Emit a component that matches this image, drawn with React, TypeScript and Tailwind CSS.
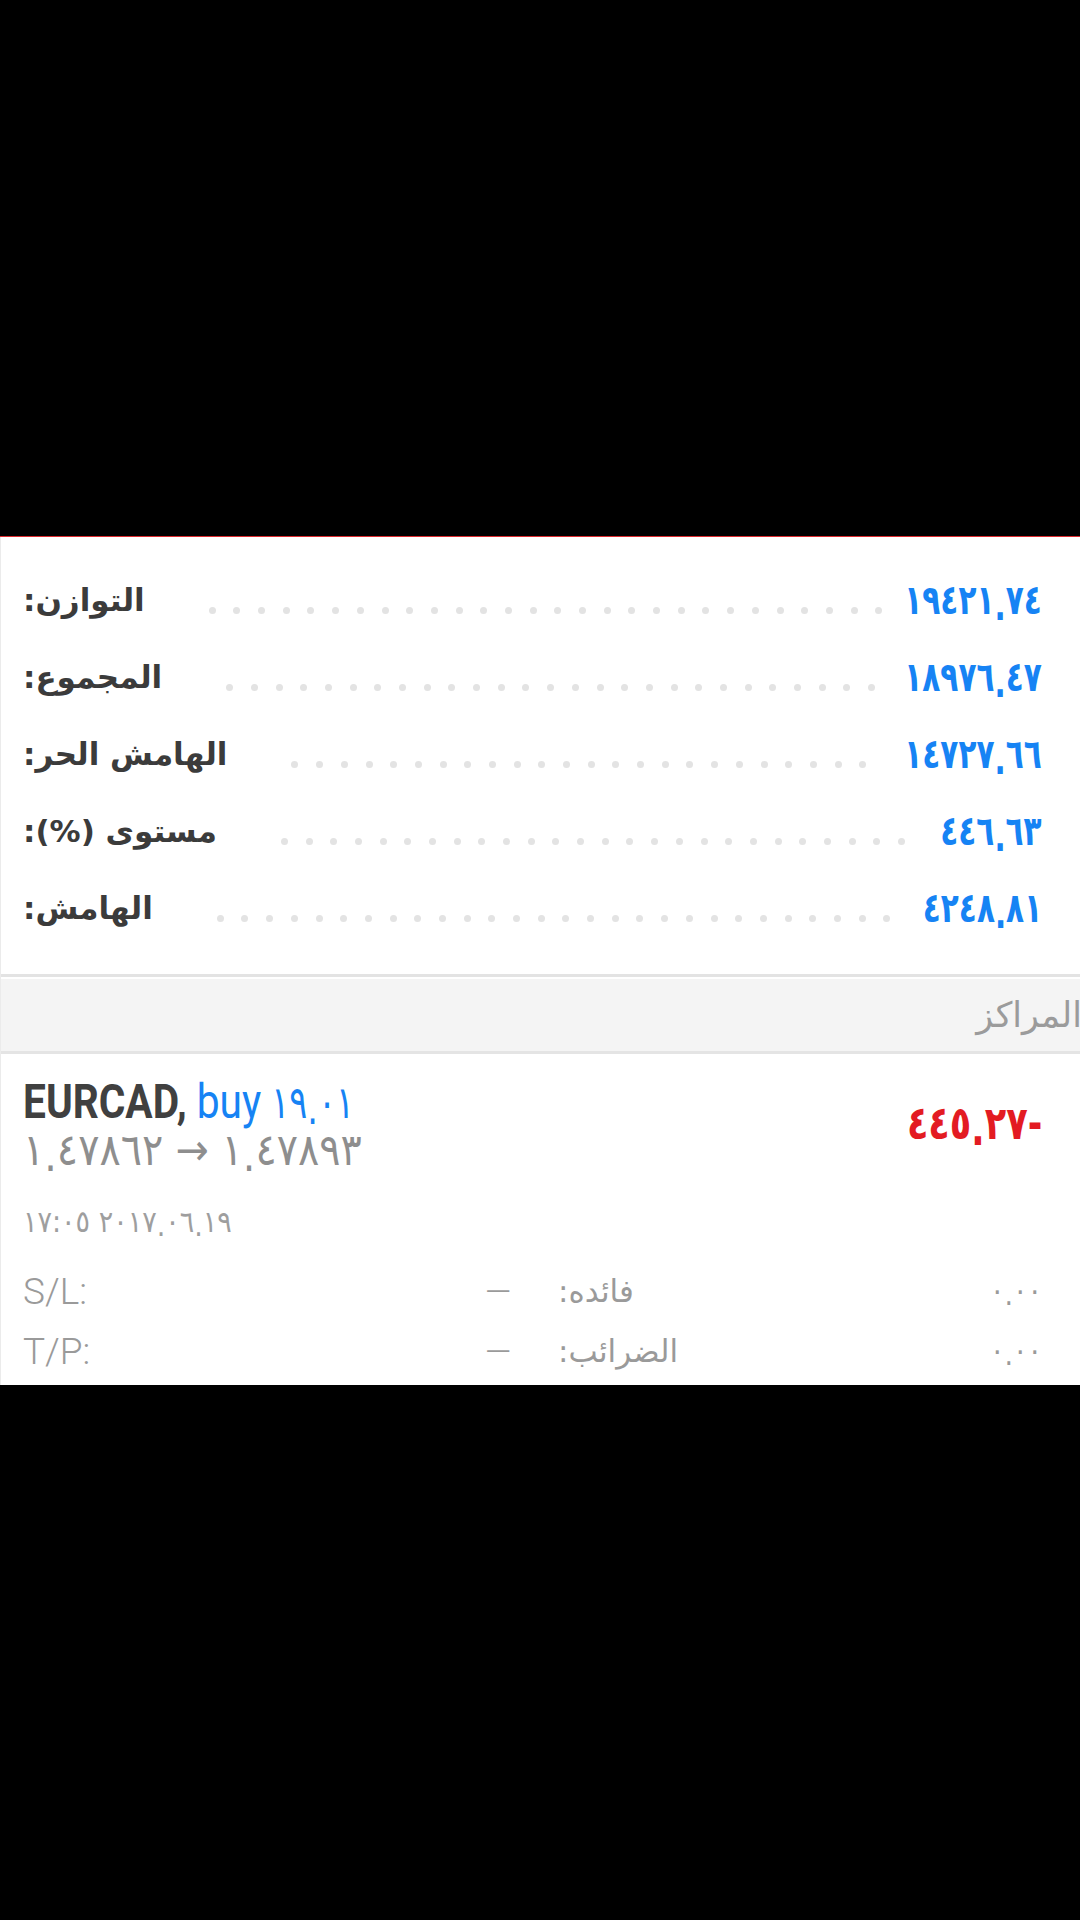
import React from "react";

const rows = [
  { label: "التوازن:", value: "١٩٤٢١.٧٤", pull: "-ml-[34px]" },
  { label: "المجموع:", value: "١٨٩٧٦.٤٧", pull: "-ml-[34px]" },
  { label: "الهامش الحر:", value: "١٤٧٢٧.٦٦", pull: "-ml-[34px]" },
  { label: "مستوى (%):", value: "٤٤٦.٦٣", pull: "-ml-[25px]" },
  { label: "الهامش:", value: "٤٢٤٨.٨١", pull: "-ml-[30px]" },
];

const dots = Array.from({ length: 40 });

function Num({ text }: { text: string }) {
  const parts = text.split(".");
  return (
    <>
      {parts.map((p, i) => (
        <React.Fragment key={i}>
          {i > 0 && <span className="relative top-[0.14em]">.</span>}
          {p}
        </React.Fragment>
      ))}
    </>
  );
}

function Leader() {
  return (
    <div className="flex-1 ml-[64px] mr-[22px] mt-[20px] h-[7px] overflow-hidden flex flex-wrap gap-x-[17.7px] gap-y-[20px]">
      {dots.map((_, i) => (
        <span key={i} className="block w-[7px] h-[7px] rounded-full bg-[#e3e3e3] shrink-0" />
      ))}
    </div>
  );
}

export default function App() {
  return (
    <div className="w-[1080px] h-[1920px] bg-black flex flex-col">
      <div className="h-[536px] shrink-0" />
      <div className="h-px bg-[#dc2a2e] shrink-0" />
      <div className="bg-white border-l border-[#ebebeb] flex flex-col shrink-0">
        {/* summary */}
        <div className="pt-[25px] pb-[27px] flex flex-col">
          {rows.map((r) => (
            <div key={r.label} className="h-[77px] flex items-center pl-[22px] pr-[38px]">
              <span
                dir="rtl"
                className="font-['DejaVu_Sans',sans-serif] font-bold text-[31px] text-[#3b3b3b] whitespace-nowrap"
              >
                {r.label}
              </span>
              <Leader />
              <span
                dir="ltr"
                className={`${r.pull} [unicode-bidi:bidi-override] font-['DejaVu_Sans_Condensed','DejaVu_Sans',sans-serif] font-bold text-[41px] leading-none text-[#1683f4] whitespace-nowrap scale-x-[0.8] origin-right`}
              >
                <Num text={r.value} />
              </span>
            </div>
          ))}
        </div>

        {/* section header */}
        <div className="h-[3px] bg-[#e3e3e3]" />
        <div className="h-[2px] bg-white" />
        <div className="h-[72px] bg-[#f4f4f4] flex items-center justify-end overflow-hidden">
          <span
            dir="rtl"
            className="-mr-[2px] font-['DejaVu_Sans',sans-serif] text-[35px] text-[#9b9b9b] whitespace-nowrap"
          >
            المراكز
          </span>
        </div>
        <div className="h-[3px] bg-[#e4e4e4]" />

        {/* position card */}
        <div className="pt-[22px] pb-[4px] pl-[22px] pr-[38px] flex flex-col">
          <div className="flex justify-between items-start">
            <div className="flex flex-col">
              <div className="h-[50px] flex items-center">
                <div className="flex items-baseline whitespace-nowrap scale-x-[0.83] origin-left">
                  <span className="font-['Roboto',sans-serif] font-bold text-[49px] leading-none text-[#404040]">
                    EURCAD,
                  </span>
                  <span className="ml-[12px] font-['Roboto',sans-serif] text-[49px] leading-none text-[#1683f4]">
                    buy
                  </span>
                  <span
                    dir="ltr"
                    className="ml-[12px] [unicode-bidi:bidi-override] font-['DejaVu_Sans_Condensed','DejaVu_Sans',sans-serif] text-[45px] leading-none text-[#1683f4]"
                  >
                    <Num text="١٩.٠١" />
                  </span>
                </div>
              </div>
              <div className="h-[48px] flex items-center">
                <span
                  dir="ltr"
                  className="[unicode-bidi:bidi-override] font-['DejaVu_Sans_Condensed','DejaVu_Sans',sans-serif] text-[44px] leading-[44px] text-[#8e8e8e] whitespace-nowrap"
                >
                  <Num text="١.٤٧٨٦٢" /> → <Num text="١.٤٧٨٩٣" />
                </span>
              </div>
            </div>
            <div className="mt-[26px] h-[42px] flex items-center">
              <span
                dir="ltr"
                className="[unicode-bidi:bidi-override] font-['DejaVu_Sans_Condensed','DejaVu_Sans',sans-serif] font-bold text-[46px] leading-none text-[#e31b22] whitespace-nowrap scale-x-[0.85] origin-right"
              >
                <Num text="٤٤٥.٢٧" />-
              </span>
            </div>
          </div>

          <div className="mt-[26px] h-[44px] flex items-center">
            <span
              dir="ltr"
              className="[unicode-bidi:bidi-override] font-['DejaVu_Sans_Condensed','DejaVu_Sans',sans-serif] text-[30px] leading-none text-[#9e9e9e] whitespace-nowrap"
            >
              <Num text="١٧:٠٥ ٢٠١٧.٠٦.١٩" />
            </span>
          </div>

          <div className="mt-[17px] flex flex-col">
            {[
              { k: "S/L:", ar: "فائده:" },
              { k: "T/P:", ar: "الضرائب:" },
            ].map((r) => (
              <div key={r.k} className="h-[60px] grid grid-cols-[462px_73px_1fr_auto] items-center">
                <span className="font-['Roboto',sans-serif] font-light text-[37px] leading-none text-[#9a9a9a]">
                  {r.k}
                </span>
                <span className="font-['Roboto',sans-serif] font-light text-[34px] leading-none text-[#9a9a9a]">
                  —
                </span>
                <span
                  dir="rtl"
                  className="justify-self-start font-['DejaVu_Sans',sans-serif] text-[31px] leading-none text-[#9a9a9a] whitespace-nowrap"
                >
                  {r.ar}
                </span>
                <span
                  dir="ltr"
                  className="[unicode-bidi:bidi-override] font-['DejaVu_Sans_Condensed','DejaVu_Sans',sans-serif] text-[30px] leading-none text-[#9a9a9a]"
                >
                  <Num text="٠.٠٠" />
                </span>
              </div>
            ))}
          </div>
        </div>
      </div>
    </div>
  );
}
